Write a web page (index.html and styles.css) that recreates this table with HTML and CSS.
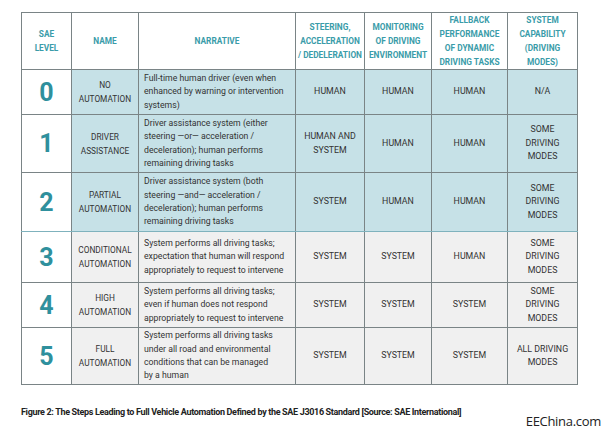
FILE: index.html
```html
<!DOCTYPE html>
<html>
<head>
<meta charset="utf-8">
<link rel="stylesheet" href="styles.css">
</head>
<body>
<div class="page">
  <table class="sae">
    <colgroup>
      <col class="c-level"><col class="c-name"><col class="c-narr"><col class="c-steer"><col class="c-mon"><col class="c-fall"><col class="c-cap">
    </colgroup>
    <thead>
      <tr class="hdr">
        <th>SAE<br>LEVEL</th>
        <th>NAME</th>
        <th>NARRATIVE</th>
        <th>STEERING,<br>ACCELERATION<br>/ DEDELERATION</th>
        <th>MONITORING<br>OF DRIVING<br>ENVIRONMENT</th>
        <th>FALLBACK<br>PERFORMANCE<br>OF DYNAMIC<br>DRIVING TASKS</th>
        <th>SYSTEM<br>CAPABILITY<br>(DRIVING<br>MODES)</th>
      </tr>
    </thead>
    <tbody>
      <tr class="blue r0">
        <td class="lvl">0</td>
        <td class="name">NO<br>AUTOMATION</td>
        <td class="narr">Full-time human driver (even when enhanced by warning or intervention systems)</td>
        <td>HUMAN</td><td>HUMAN</td><td>HUMAN</td><td>N/A</td>
      </tr>
      <tr class="blue r1">
        <td class="lvl">1</td>
        <td class="name">DRIVER<br>ASSISTANCE</td>
        <td class="narr">Driver assistance system (either steering —or— acceleration / deceleration); human performs remaining driving tasks</td>
        <td>HUMAN AND<br>SYSTEM</td><td>HUMAN</td><td>HUMAN</td><td>SOME<br>DRIVING<br>MODES</td>
      </tr>
      <tr class="blue r2">
        <td class="lvl">2</td>
        <td class="name">PARTIAL<br>AUTOMATION</td>
        <td class="narr">Driver assistance system (both steering —and— acceleration / deceleration); human performs remaining driving tasks</td>
        <td>SYSTEM</td><td>HUMAN</td><td>HUMAN</td><td>SOME<br>DRIVING<br>MODES</td>
      </tr>
      <tr class="gray r3">
        <td class="lvl">3</td>
        <td class="name">CONDITIONAL<br>AUTOMATION</td>
        <td class="narr">System performs all driving tasks; expectation that human will respond appropriately to request to intervene</td>
        <td>SYSTEM</td><td>SYSTEM</td><td>HUMAN</td><td>SOME<br>DRIVING<br>MODES</td>
      </tr>
      <tr class="gray r4">
        <td class="lvl">4</td>
        <td class="name">HIGH<br>AUTOMATION</td>
        <td class="narr">System performs all driving tasks; even if human does not respond appropriately to request to intervene</td>
        <td>SYSTEM</td><td>SYSTEM</td><td>SYSTEM</td><td>SOME<br>DRIVING<br>MODES</td>
      </tr>
      <tr class="gray r5">
        <td class="lvl">5</td>
        <td class="name">FULL<br>AUTOMATION</td>
        <td class="narr">System performs all driving tasks<br>under all road and environmental<br>conditions that can be managed<br>by a human</td>
        <td>SYSTEM</td><td>SYSTEM</td><td>SYSTEM</td><td>ALL DRIVING<br>MODES</td>
      </tr>
    </tbody>
  </table>
  <div class="foot">
    <p class="caption">Figure 2: The Steps Leading to Full Vehicle Automation Defined by the SAE J3016 Standard [Source: SAE International]</p>
    <span class="brand">EEChina.com</span>
  </div>
</div>
</body>
</html>
```
FILE: styles.css
```css
html, body { margin: 0; padding: 0; background: #fff; }
.page { padding: 12px 0 0 21px; width: 588px; }
.sae {
  border-collapse: collapse;
  table-layout: fixed;
  width: 556px;
  font-family: Roboto, "Liberation Sans", sans-serif;
  color: #333;
  border: 1px solid #8c8c8c;
}
.c-level { width: 50px; }
.c-name { width: 67px; }
.c-narr { width: 157px; }
.c-steer { width: 69px; }
.c-mon { width: 67px; }
.c-fall { width: 76px; }
.c-cap { width: 70px; }
.sae th, .sae td {
  border: 1px solid #7a8486;
  padding: 0;
  text-align: center;
  vertical-align: middle;
  font-size: 8.8px;
  line-height: 13.5px;
}
.sae th {
  color: #3a9ca9;
  font-weight: 700;
  font-size: 8.3px;
  line-height: 14px;
  background: #fff;
}
.hdr { height: 56px; }
.r0 { height: 45px; }
.r1 { height: 58px; }
.r2 { height: 59px; }
.r3 { height: 51px; }
.r4 { height: 45px; }
.r5 { height: 57px; }
.blue td { background: #c6e1e7; }
.gray td { background: #f0f0f0; }
.sae td.lvl {
  background: #fff;
  color: #2f909d;
  font-weight: 700;
  font-size: 25px;
  line-height: 25px;
}
.sae td.name { font-size: 8.3px; line-height: 14px; }
.sae td.narr {
  text-align: left;
  padding: 0 4px 0 5px;
  font-size: 8.7px;
  line-height: 13.3px;
}
.r2 td { border-bottom-color: #7fb2bd; }
.foot {
  display: flex;
  align-items: flex-start;
  justify-content: space-between;
  padding-top: 22px;
  width: 580px;
}
.caption {
  margin: 0;
  font-family: Roboto, "Liberation Sans", sans-serif;
  font-weight: 700;
  font-size: 9px;
  color: #222;
  letter-spacing: -0.33px;
  white-space: nowrap;
}
.brand {
  margin-top: 5px;
  font-family: "Open Sans", "Liberation Sans", sans-serif;
  font-size: 13px;
  color: #222;
  letter-spacing: -0.3px;
}
```
